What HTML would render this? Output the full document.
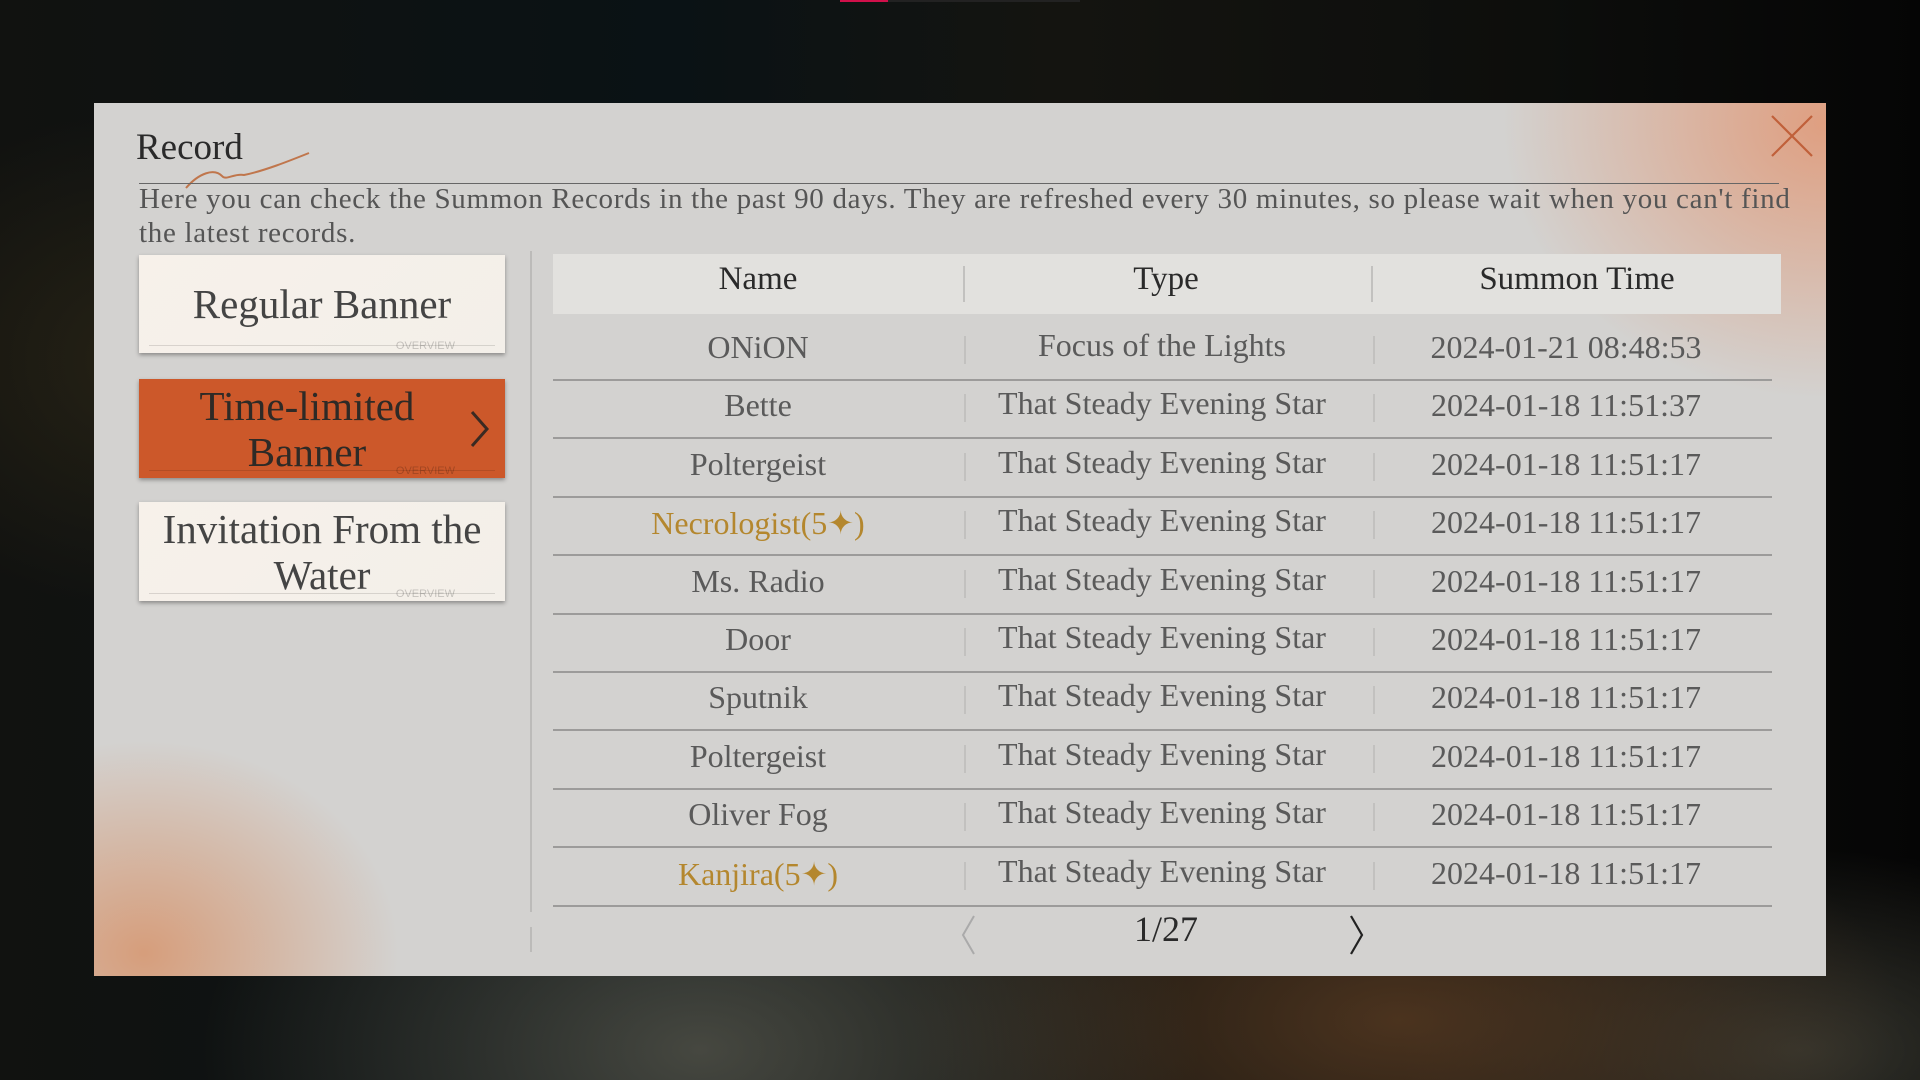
<!DOCTYPE html>
<html><head><meta charset="utf-8"><style>
*{margin:0;padding:0;box-sizing:border-box}
html{width:1920px;height:1080px;overflow:hidden}
body{width:1920px;height:1080px;overflow:hidden;position:relative;font-family:"Liberation Serif",serif;
background:radial-gradient(ellipse 300px 250px at 150px 360px,rgba(60,50,25,.5),transparent),radial-gradient(ellipse 500px 300px at 700px 1050px,rgba(85,85,75,.8),transparent),radial-gradient(ellipse 500px 250px at 1400px 1020px,rgba(90,60,35,.8),transparent),radial-gradient(ellipse 400px 200px at 1800px 1050px,rgba(70,70,60,.7),transparent),linear-gradient(90deg,#111210 0%,#0a1215 35%,#141410 55%,#0d0e0c 80%,#050505 100%)}
.pink{position:absolute;left:840px;top:0;width:48px;height:2px;background:#d0104a}
.pink2{position:absolute;left:888px;top:0;width:192px;height:2px;background:#222}
.panel{position:absolute;left:94px;top:103px;width:1732px;height:873px;background:#d3d2d0;overflow:hidden}
.glow1{position:absolute;left:1380px;top:-280px;width:700px;height:600px;background:radial-gradient(ellipse at center,rgba(225,150,115,.85),rgba(225,150,115,0) 65%)}
.glow2{position:absolute;left:-250px;top:600px;width:600px;height:500px;background:radial-gradient(ellipse at center,rgba(215,140,95,.75),rgba(215,140,95,0) 60%)}
.abs{position:absolute}
.title{left:42px;top:23px;font-size:37px;color:#2a2a2a}
.desc{left:45px;top:79px;width:1665px;font-size:29px;letter-spacing:0.7px;line-height:34px;color:#555}
.btn{position:absolute;left:45px;width:366px;box-shadow:0 2px 4px rgba(0,0,0,.35);display:flex;align-items:center;justify-content:center;text-align:center;font-size:41px;line-height:46px;color:#444}
.btn.w{background:linear-gradient(135deg,#f7f1ea,#f3efe9)}
.btn.o{background:#cc582a;color:#2e2a26}
.btn .ov{position:absolute;right:50px;bottom:1px;font-family:"Liberation Sans",sans-serif;font-size:11px;line-height:12px;color:rgba(0,0,0,.2)}
.btn .ln{position:absolute;left:10px;right:10px;bottom:7px;height:1px;background:rgba(0,0,0,.12)}
.vd{left:436px;top:148px;width:2px;height:661px;background:#bcbbb9}
.vd2{left:436px;top:824px;width:2px;height:25px;background:#bcbbb9}
.thead{left:459px;top:151px;width:1228px;height:60px;background:#e2e1de;}
.cell{position:absolute;text-align:center;white-space:nowrap}
.h{font-size:33px;color:#2a2a2a}
.r{font-size:32px;color:#5a5a5a}
.g{color:#b4872e}
.sep{position:absolute;left:459px;width:1219px;height:2px;background:#9c9b9a}
.cd{position:absolute;width:2px;background:#c2c1bf}
.close{left:1675px;top:10px}
</style></head><body>
<div class="pink"></div><div class="pink2"></div>
<div class="panel">
<div class="glow1"></div><div class="glow2"></div>
<div class="abs title">Record</div>
<svg class="abs" style="left:90px;top:40px" width="130" height="50"><path d="M2 45 C15 30 30 25 38 33 C42 38 50 30 60 32 C80 28 105 18 125 10" stroke="#c0764c" stroke-width="2" fill="none"/></svg>
<div class="abs" style="left:45px;top:80px;width:1640px;height:1px;background:#666"></div>
<div class="abs desc">Here you can check the Summon Records in the past 90 days. They are refreshed every 30 minutes, so please wait when you can't find the latest records.</div>
<div class="btn w" style="top:152px;height:98px">Regular Banner<div class="ln"></div><div class="ov">OVERVIEW</div></div>
<div class="btn o" style="top:276px;height:99px"><span style="margin-right:30px">Time-limited<br>Banner</span><svg style="position:absolute;right:14px;top:30px" width="22" height="40"><path d="M3 3 L18 20 L3 37" stroke="#3a2a22" stroke-width="3" fill="none"/></svg><div class="ln"></div><div class="ov">OVERVIEW</div></div>
<div class="btn w" style="top:399px;height:99px">Invitation From the<br>Water<div class="ln"></div><div class="ov">OVERVIEW</div></div>
<div class="abs vd"></div><div class="abs vd2"></div>
<div class="abs thead"></div>
<div class="cd" style="left:869px;top:163px;height:36px"></div>
<div class="cd" style="left:1277px;top:163px;height:36px"></div>
<div class="cell h" style="left:464px;width:400px;top:158px">Name</div>
<div class="cell h" style="left:872px;width:400px;top:158px">Type</div>
<div class="cell h" style="left:1283px;width:400px;top:158px">Summon Time</div>
<svg class="abs close" width="46" height="46"><path d="M3 3 L43 43 M43 3 L3 43" stroke="#c0603a" stroke-width="2.2" fill="none"/></svg>
<div id="rows"></div>
<svg class="abs" style="left:865px;top:810px" width="20" height="44"><path d="M15 3 L4 22 L15 41" stroke="#aaa" stroke-width="2" fill="none"/></svg>
<div class="cell" style="left:972px;width:200px;top:805px;font-size:36px;color:#2a2a2a">1/27</div>
<svg class="abs" style="left:1253px;top:810px" width="20" height="44"><path d="M4 3 L15 22 L4 41" stroke="#222" stroke-width="2.2" fill="none"/></svg>
<script>
var d=[["ONiON","Focus of the Lights","2024-01-21 08:48:53"],["Bette",0,"2024-01-18 11:51:37"],["Poltergeist"],["Necrologist(5✦)",0,0,1],["Ms. Radio"],["Door"],["Sputnik"],["Poltergeist"],["Oliver Fog"],["Kanjira(5✦)",0,0,1]];
var h="";
for(var i=0;i<10;i++){var r=d[i];var y=221+i*58.4;
h+='<div class="cell r'+(r[3]?' g':'')+'" style="left:464px;width:400px;top:'+(y+5)+'px">'+r[0]+'</div>';
h+='<div class="cell r" style="left:868px;width:400px;top:'+(y+3)+'px">'+(r[1]||"That Steady Evening Star")+'</div>';
h+='<div class="cell r" style="left:1272px;width:400px;top:'+(y+5)+'px">'+(r[2]||"2024-01-18 11:51:17")+'</div>';
h+='<div class="cd" style="left:870px;top:'+(y+12)+'px;height:28px"></div><div class="cd" style="left:1279px;top:'+(y+12)+'px;height:28px"></div>';
h+='<div class="sep" style="top:'+(y+55)+'px"></div>';}
document.getElementById("rows").outerHTML=h;
</script>
</div>
</body></html>
